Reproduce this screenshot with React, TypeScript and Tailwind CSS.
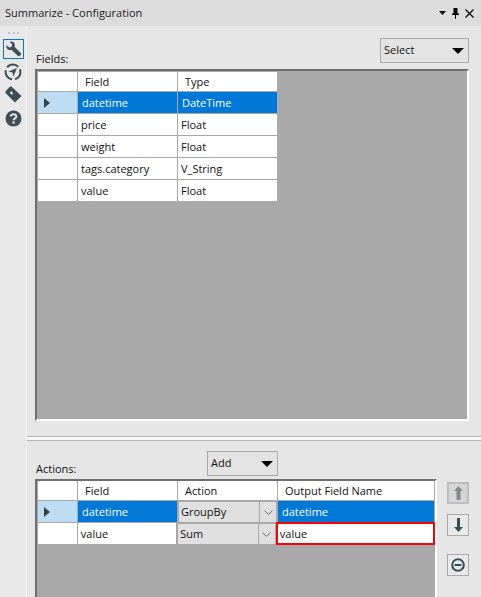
const ink = "#3c4f57";

function Rail() {
  return (
    <div className="w-[26px] shrink-0 flex flex-col items-center bg-[#e8e8e8]">
      <div className="mt-[6px] h-[2px] w-[11px] border-t-2 border-dotted border-[#c0c0c0]" />
      <div className="mt-[5px] w-[21px] h-[20px] border border-[#0078d7] flex items-center justify-center">
        <svg width="17" height="16" viewBox="0 0 17 17">
          <path d="M1 4.5 L4 7 L6.5 6 L7 3.5 L4.6 1 C7 0 9.5 1.2 9.8 4 L9.6 6 L16 12.4 C16.8 13.4 16.6 14.6 15.8 15.4 C15 16.2 13.6 16.4 12.7 15.5 L6.3 9.3 C3.4 10.4 0.4 8 1 4.5 Z" fill={ink} />
        </svg>
      </div>
      <svg className="mt-[4px]" width="18" height="18" viewBox="0 0 18 18">
        <circle cx="9" cy="9" r="7.4" fill="none" stroke={ink} strokeWidth="2" strokeDasharray="12.5 3" strokeDashoffset="3" />
        <path d="M4.5 8.5 L13 5 L9.5 13.5 L8.5 9.5 Z" fill={ink} />
      </svg>
      <svg className="mt-[5px]" width="17" height="17" viewBox="0 0 17 17">
        <path d="M0.5 5.5 L5 0.5 L6.5 0.5 L16.5 10 L10 16.5 L0.5 7 Z" fill={ink} />
        <rect x="5" y="6" width="3" height="2" transform="rotate(45 6.5 7)" fill="#e8e8e8" />
      </svg>
      <svg className="mt-[7px]" width="17" height="17" viewBox="0 0 17 17">
        <circle cx="8.5" cy="8.5" r="8" fill={ink} />
        <path d="M5.8 6.6 C5.8 3.4 11.3 3.4 11.3 6.4 C11.3 8.4 8.6 8.2 8.6 10.2" fill="none" stroke="#e8e8e8" strokeWidth="2" />
        <rect x="7.5" y="11.4" width="2.2" height="2.2" fill="#e8e8e8" />
      </svg>
    </div>
  );
}

function Dropdown({ label, className }: { label: string; className: string }) {
  return (
    <div className={`h-[25px] flex items-center justify-between border border-[#a9a9a9] bg-[#e3e3e3] pl-[3px] pr-[4px] ${className}`}>
      <span>{label}</span>
      <svg width="12" height="6" viewBox="0 0 12 6">
        <path d="M0 0 H12 L6 6 Z" fill="#000" />
      </svg>
    </div>
  );
}

function Corner() {
  return <div className="w-[40px] h-[20px] bg-white border-r border-b border-[#a9a9a9]" />;
}

function HeaderCell({ label, className }: { label: string; className: string }) {
  return (
    <div className={`h-[20px] bg-white flex items-center pl-[7px] pt-[1px] border-r border-b border-[#a9a9a9] ${className}`}>
      {label}
    </div>
  );
}

function RowHeader({ active }: { active?: boolean }) {
  return (
    <div className={`w-[40px] h-[22px] flex items-center pl-[6px] border-r border-b border-[#a9a9a9] ${active ? "bg-[#bbdcf3]" : "bg-white"}`}>
      {active && (
        <svg width="6" height="10" viewBox="0 0 6 10">
          <path d="M0 0 L6 5 L0 10 Z" fill="#3f3f3f" />
        </svg>
      )}
    </div>
  );
}

function Cell({ label, active, className }: { label: string; active?: boolean; className: string }) {
  return (
    <div className={`h-[22px] flex items-center pt-[1px] border-r border-b border-[#a9a9a9] ${active ? "bg-[#0078d7] text-white pl-[4px]" : "bg-white pl-[3px]"} ${className}`}>
      {label}
    </div>
  );
}

function ComboCell({ label }: { label: string }) {
  return (
    <div className="w-[100px] h-[22px] flex pr-[2px] pb-[1px] pl-[1px] pt-[1px]">
      <span className="flex-1 flex items-center pl-[2px] pt-[1px] bg-[#e0e0e0]">{label}</span>
      <div className="w-[17px] flex items-center justify-center border-l border-[#a9a9a9] bg-[#e0e0e0]">
        <svg width="9" height="5" viewBox="0 0 9 5">
          <path d="M0.5 0.5 L4.5 4.5 L8.5 0.5" fill="none" stroke="#6a6a6a" />
        </svg>
      </div>
    </div>
  );
}

function SideButton({ children, muted }: { children: React.ReactNode; muted?: boolean }) {
  return (
    <div className={`w-[22px] h-[22px] flex items-center justify-center ${muted ? "border-2 border-[#bdbdbd] bg-[#d6d6d6]" : "border border-[#a9a9a9] bg-[#e9e9e9]"}`}>
      {children}
    </div>
  );
}

const fields = [
  { name: "datetime", type: "DateTime", active: true },
  { name: "price", type: "Float" },
  { name: "weight", type: "Float" },
  { name: "tags.category", type: "V_String" },
  { name: "value", type: "Float" },
];

export default function App() {
  return (
    <div
      className="w-[481px] h-[597px] overflow-hidden flex flex-col bg-[#e6e6e6] text-[#111] text-[11px]"
      style={{ fontFamily: '"Open Sans", "Noto Sans", sans-serif' }}
    >
      {/* title bar */}
      <div className="h-[26px] shrink-0 bg-[#dcdcdc] flex items-center justify-between pl-[5px] pr-[7px]">
        <span className="text-[#222]">Summarize - Configuration</span>
        <div className="flex items-center gap-[6px]">
          <svg width="7" height="4" viewBox="0 0 7 4"><path d="M0 0 H7 L3.5 4 Z" fill="#000" /></svg>
          <svg width="7" height="11" viewBox="0 0 7 11"><path d="M1.5 0 H5.5 V5.5 H7 V7 H4 V11 H3 V7 H0 V5.5 H1.5 Z" fill="#000" /></svg>
          <svg width="9" height="9" viewBox="0 0 9 9"><path d="M0.5 0.5 L8.5 8.5 M8.5 0.5 L0.5 8.5" stroke="#000" strokeWidth="1.2" /></svg>
        </div>
      </div>

      <div className="flex-1 flex min-h-0">
        <Rail />
        <div className="flex-1 flex flex-col min-w-0 border-l border-[#f2f2f2]">
          {/* fields panel */}
          <div className="h-[410px] shrink-0 flex flex-col pl-[8px] pr-[12px] pt-[12px]">
            <div className="h-[31px] flex justify-between items-start">
              <span className="mt-[13px] pl-[1px]">Fields:</span>
              <Dropdown label="Select" className="w-[89px]" />
            </div>
            <div className="flex-1 mb-[15px] bg-[#a9a9a9] border-2 border-t-[#6f6f6f] border-l-[#6f6f6f] border-r-white border-b-white pt-[1px] pl-[1px]">
              <div className="flex">
                <Corner />
                <HeaderCell label="Field" className="w-[100px]" />
                <HeaderCell label="Type" className="w-[100px]" />
              </div>
              {fields.map((f) => (
                <div key={f.name} className="flex">
                  <RowHeader active={f.active} />
                  <Cell label={f.name} active={f.active} className="w-[100px]" />
                  <Cell label={f.type} active={f.active} className="w-[100px]" />
                </div>
              ))}
            </div>
          </div>

          {/* splitter */}
          <div className="h-[5px] shrink-0 border-t border-b border-[#b4b4b4] bg-[#f6f6f6]" />

          {/* actions panel */}
          <div className="flex-1 min-h-0 flex flex-col pl-[8px] pr-[12px]">
            <div className="h-[38px] shrink-0 flex items-start">
              <span className="mt-[20px] pl-[1px] w-[172px]">Actions:</span>
              <Dropdown label="Add" className="w-[71px] mt-[10px]" />
            </div>
            <div className="flex-1 flex gap-[10px] min-h-0">
              <div className="w-[402px] h-[200px] bg-[#a9a9a9] border-2 border-t-[#6f6f6f] border-l-[#6f6f6f] border-r-white border-b-white pl-[1px]">
                <div className="flex">
                  <Corner />
                  <HeaderCell label="Field" className="w-[100px]" />
                  <HeaderCell label="Action" className="w-[100px]" />
                  <HeaderCell label="Output Field Name" className="w-[157px]" />
                </div>
                <div className="flex">
                  <RowHeader active />
                  <Cell label="datetime" active className="w-[100px]" />
                  <ComboCell label="GroupBy" />
                  <Cell label="datetime" active className="w-[157px]" />
                </div>
                <div className="flex">
                  <RowHeader />
                  <Cell label="value" className="w-[100px]" />
                  <ComboCell label="Sum" />
                  <div className="w-[160px] h-[23px] -ml-[1px] -mt-[1px] flex items-center pl-[2px] pt-[1px] bg-white border-2 border-[#ff0000]">
                    value
                  </div>
                </div>
              </div>
              <div className="flex flex-col pt-[3px]">
                <SideButton muted>
                  <svg width="9" height="14" viewBox="0 0 9 14"><path d="M4.5 0 L9 5 H6.5 V14 H2.5 V5 H0 Z" fill="#7d8a8e" /></svg>
                </SideButton>
                <div className="mt-[10px]">
                  <SideButton>
                    <svg width="9" height="14" viewBox="0 0 9 14"><path d="M4.5 14 L9 9 H6 V0 H3 V9 H0 Z" fill="#2f4f55" /></svg>
                  </SideButton>
                </div>
                <div className="mt-[18px]">
                  <SideButton>
                    <svg width="14" height="14" viewBox="0 0 14 14">
                      <circle cx="7" cy="7" r="5.8" fill="none" stroke="#2f4f55" strokeWidth="2" />
                      <rect x="3.5" y="6" width="7" height="2" fill="#2f4f55" />
                    </svg>
                  </SideButton>
                </div>
              </div>
            </div>
          </div>
        </div>
      </div>
    </div>
  );
}
